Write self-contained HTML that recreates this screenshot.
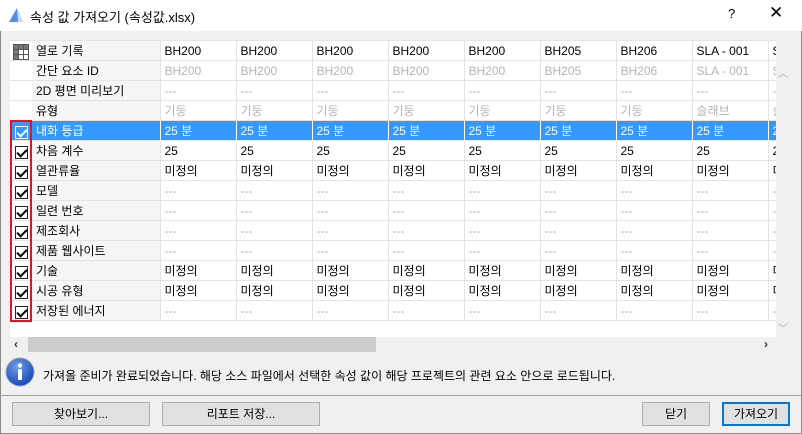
<!DOCTYPE html>
<html><head><meta charset="utf-8"><style>
*{margin:0;padding:0;box-sizing:border-box}
body{width:802px;height:434px;overflow:hidden;background:#f0f0f0;font-family:"Liberation Sans","Noto Sans CJK KR","NanumGothic",sans-serif;font-size:12px;color:#000;position:relative}
.win{position:absolute;left:0;top:0;width:802px;height:434px;border:1px solid #8a8a8a;border-top:none}
.title{position:absolute;left:0;top:0;width:802px;height:31px;background:#fff}
.title .t{position:absolute;left:30px;top:7px;font-size:13px}
.grid{position:absolute;left:10px;top:40px;width:766px;height:297px;background:#fff;overflow:hidden}
table{border-collapse:collapse;table-layout:fixed;position:absolute;left:0;top:0;width:834px}
td{height:20px;border:1px solid #e4e4e4;padding:0 0 0 4px;white-space:nowrap;overflow:hidden;font-size:12px;line-height:18px}
td.cb{width:22px;padding:0;border-right:none;border-left:none}
td.lb{width:128px;background:#f6f6f6;border-left:none}
td.d{width:76px}
tr.g td.d{color:#b4b4b4}
tr.sel td{background:#3399ff;color:#fff;border-color:#fff;border-bottom:1px dotted #000}
.chk{display:block;width:13px;height:13px;border:1px solid #222;margin:3px 0 0 5px;background:#fff;position:relative}
.chk:after{content:"";position:absolute;left:3px;top:0px;width:4px;height:8px;border:solid #000;border-width:0 2px 2px 0;transform:rotate(45deg)}
tr.sel .chk{border-color:#fff;background:#3399ff}
tr.sel .chk:after{border-color:#fff}
.red{position:absolute;left:10px;top:120px;width:22px;height:202px;border:2px solid #e81123}
.vs{position:absolute;left:776px;top:40px;width:14px;height:297px;background:#f0f0f0;color:#aaa;font-size:10px;text-align:center}
.hs{position:absolute;left:10px;top:337px;width:766px;height:15px;background:#f0f0f0}
.thumb{position:absolute;left:18px;top:0;width:348px;height:15px;background:#cdcdcd}
.btn{position:absolute;top:402px;height:24px;background:#e1e1e1;border:1px solid #adadad;text-align:center;line-height:22px;font-size:12px}
</style></head><body>
<div class="win"></div>
<div class="title">
<svg style="position:absolute;left:8px;top:7px" width="16" height="16"><polygon points="1,15 9,1 15,15" fill="#4f8fe6"/><polygon points="9,1 15,15 10,15" fill="#c9ddf7"/></svg>
<span class="t">속성 값 가져오기 (속성값.xlsx)</span>
<span style="position:absolute;left:728px;top:6px;font-size:13px">?</span>
<span style="position:absolute;left:769px;top:3px;font-size:17px">✕</span>
</div>
<div class="grid">
<table>
<colgroup><col style="width:22px"><col style="width:128px"><col style="width:76px"><col style="width:76px"><col style="width:76px"><col style="width:76px"><col style="width:76px"><col style="width:76px"><col style="width:76px"><col style="width:76px"><col style="width:76px"></colgroup>
<tr><td class="cb"><svg style="margin:2px 0 0 3px;display:block" width="16" height="16"><rect x="0.5" y="0.5" width="15" height="15" fill="#fff" stroke="#555"/><rect x="1" y="1" width="4" height="14" fill="#777"/><rect x="1" y="1" width="14" height="4" fill="#777"/><path d="M5.5 1V15M10.5 1V15M1 5.5H15M1 10.5H15" stroke="#555"/></svg></td><td class="lb">열로 기록</td><td class="d">BH200</td><td class="d">BH200</td><td class="d">BH200</td><td class="d">BH200</td><td class="d">BH200</td><td class="d">BH205</td><td class="d">BH206</td><td class="d">SLA - 001</td><td class="d">S</td></tr>
<tr class="g"><td class="cb"></td><td class="lb">간단 요소 ID</td><td class="d">BH200</td><td class="d">BH200</td><td class="d">BH200</td><td class="d">BH200</td><td class="d">BH200</td><td class="d">BH205</td><td class="d">BH206</td><td class="d">SLA - 001</td><td class="d">S</td></tr>
<tr class="g"><td class="cb"></td><td class="lb">2D 평면 미리보기</td><td class="d">---</td><td class="d">---</td><td class="d">---</td><td class="d">---</td><td class="d">---</td><td class="d">---</td><td class="d">---</td><td class="d">---</td><td class="d">-</td></tr>
<tr class="g"><td class="cb"></td><td class="lb">유형</td><td class="d">기둥</td><td class="d">기둥</td><td class="d">기둥</td><td class="d">기둥</td><td class="d">기둥</td><td class="d">기둥</td><td class="d">기둥</td><td class="d">슬래브</td><td class="d">슬</td></tr>
<tr class="sel"><td class="cb"><span class="chk"></span></td><td class="lb">내화 등급</td><td class="d">25 분</td><td class="d">25 분</td><td class="d">25 분</td><td class="d">25 분</td><td class="d">25 분</td><td class="d">25 분</td><td class="d">25 분</td><td class="d">25 분</td><td class="d">2</td></tr>
<tr><td class="cb"><span class="chk"></span></td><td class="lb">차음 계수</td><td class="d">25</td><td class="d">25</td><td class="d">25</td><td class="d">25</td><td class="d">25</td><td class="d">25</td><td class="d">25</td><td class="d">25</td><td class="d">2</td></tr>
<tr><td class="cb"><span class="chk"></span></td><td class="lb">열관류율</td><td class="d">미정의</td><td class="d">미정의</td><td class="d">미정의</td><td class="d">미정의</td><td class="d">미정의</td><td class="d">미정의</td><td class="d">미정의</td><td class="d">미정의</td><td class="d">미</td></tr>
<tr class="g"><td class="cb"><span class="chk"></span></td><td class="lb">모델</td><td class="d">---</td><td class="d">---</td><td class="d">---</td><td class="d">---</td><td class="d">---</td><td class="d">---</td><td class="d">---</td><td class="d">---</td><td class="d">-</td></tr>
<tr class="g"><td class="cb"><span class="chk"></span></td><td class="lb">일련 번호</td><td class="d">---</td><td class="d">---</td><td class="d">---</td><td class="d">---</td><td class="d">---</td><td class="d">---</td><td class="d">---</td><td class="d">---</td><td class="d">-</td></tr>
<tr class="g"><td class="cb"><span class="chk"></span></td><td class="lb">제조회사</td><td class="d">---</td><td class="d">---</td><td class="d">---</td><td class="d">---</td><td class="d">---</td><td class="d">---</td><td class="d">---</td><td class="d">---</td><td class="d">-</td></tr>
<tr class="g"><td class="cb"><span class="chk"></span></td><td class="lb">제품 웹사이트</td><td class="d">---</td><td class="d">---</td><td class="d">---</td><td class="d">---</td><td class="d">---</td><td class="d">---</td><td class="d">---</td><td class="d">---</td><td class="d">-</td></tr>
<tr><td class="cb"><span class="chk"></span></td><td class="lb">기술</td><td class="d">미정의</td><td class="d">미정의</td><td class="d">미정의</td><td class="d">미정의</td><td class="d">미정의</td><td class="d">미정의</td><td class="d">미정의</td><td class="d">미정의</td><td class="d">미</td></tr>
<tr><td class="cb"><span class="chk"></span></td><td class="lb">시공 유형</td><td class="d">미정의</td><td class="d">미정의</td><td class="d">미정의</td><td class="d">미정의</td><td class="d">미정의</td><td class="d">미정의</td><td class="d">미정의</td><td class="d">미정의</td><td class="d">미</td></tr>
<tr class="g"><td class="cb"><span class="chk"></span></td><td class="lb">저장된 에너지</td><td class="d">---</td><td class="d">---</td><td class="d">---</td><td class="d">---</td><td class="d">---</td><td class="d">---</td><td class="d">---</td><td class="d">---</td><td class="d">-</td></tr>
</table>
</div>
<div class="red"></div>
<div class="vs"><div style="position:absolute;top:25px;width:14px">︿</div><div style="position:absolute;top:280px;width:14px">﹀</div></div>
<div class="hs"><span style="position:absolute;left:4px;top:0;font-size:12px;color:#333;font-weight:bold">‹</span><div class="thumb"></div><span style="position:absolute;left:754px;top:0;font-size:12px;color:#333;font-weight:bold">›</span></div>
<svg style="position:absolute;left:5px;top:357px" width="30" height="30"><defs><radialGradient id="g" cx="40%" cy="30%" r="70%"><stop offset="0" stop-color="#6f9ff0"/><stop offset="1" stop-color="#1a47b0"/></radialGradient></defs><circle cx="15" cy="15" r="14" fill="url(#g)" stroke="#9aa" stroke-width="1"/><circle cx="15" cy="8.5" r="2.2" fill="#fff"/><rect x="13" y="12" width="4" height="11" rx="1" fill="#fff"/></svg>
<div style="position:absolute;left:43px;top:367px;font-size:12px">가져올 준비가 완료되었습니다. 해당 소스 파일에서 선택한 속성 값이 해당 프로젝트의 관련 요소 안으로 로드됩니다.</div>
<div style="position:absolute;left:0;top:395px;width:802px;height:1px;background:#a0a0a0"></div>
<div class="btn" style="left:12px;width:138px">찾아보기...</div>
<div class="btn" style="left:162px;width:158px">리포트 저장...</div>
<div class="btn" style="left:642px;width:68px">닫기</div>
<div class="btn" style="left:722px;width:68px;border:2px solid #0078d7;line-height:20px">가져오기</div>
</body></html>
